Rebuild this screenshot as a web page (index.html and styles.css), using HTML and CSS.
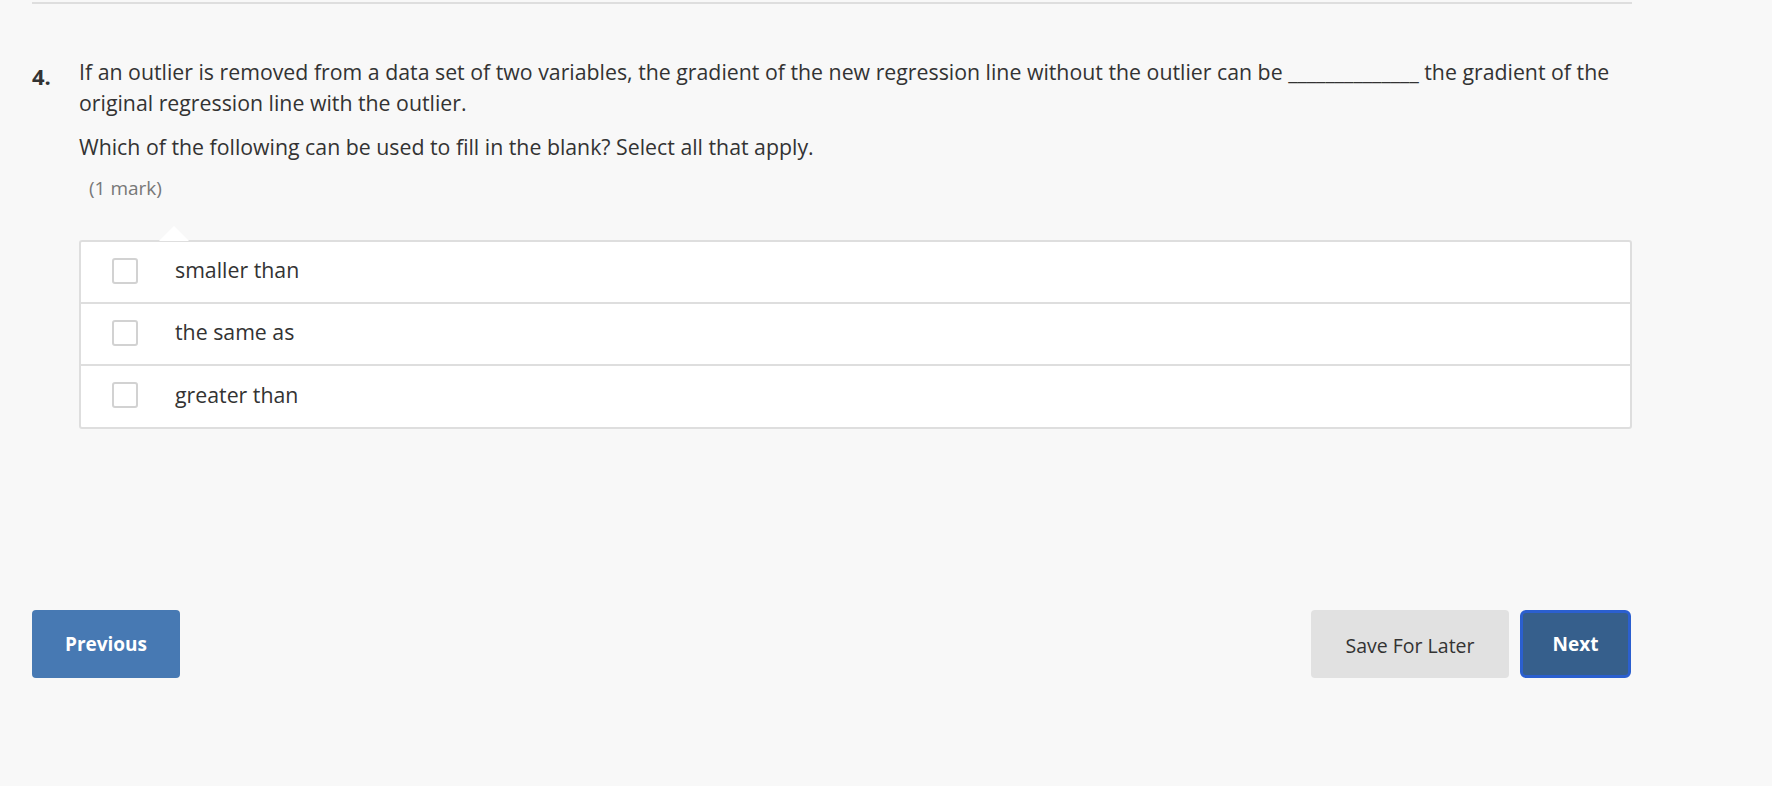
FILE: index.html
```html
<!DOCTYPE html>
<html>
<head>
<meta charset="utf-8">
<link rel="stylesheet" href="styles.css">
</head>
<body>
<div class="page">
  <div class="rule"></div>
  <div class="question">
    <div class="qnum">4.</div>
    <div class="qbody">
      <p class="stem">If an outlier is removed from a data set of two variables, the gradient of the new regression line without the outlier can be ______________ the gradient of the original regression line with the outlier.</p>
      <p class="prompt">Which of the following can be used to fill in the blank? Select all that apply.</p>
      <div class="marks">(1 mark)</div>
      <div class="options">
        <span class="caret"></span>
        <label class="option"><span class="box"></span><span class="label">smaller than</span></label>
        <label class="option"><span class="box"></span><span class="label">the same as</span></label>
        <label class="option"><span class="box"></span><span class="label">greater than</span></label>
      </div>
    </div>
  </div>
  <div class="actions">
    <button class="btn btn-prev">Previous</button>
    <div class="right">
      <button class="btn btn-save">Save For Later</button>
      <button class="btn btn-next">Next</button>
    </div>
  </div>
</div>
</body>
</html>
```

FILE: styles.css
```css
html, body {
  margin: 0;
  padding: 0;
  background: #f8f8f8;
}
body {
  font-family: "Open Sans", "Noto Sans", sans-serif;
  color: #333;
}
.page {
  width: 1600px;
  margin-left: 32px;
}
.rule {
  margin-top: 2px;
  border-top: 2px solid #dedede;
}
.question {
  display: flex;
  margin-top: 53px;
}
.qnum {
  width: 47px;
  flex: none;
  font-size: 22px;
  font-weight: 700;
  line-height: 30.4px;
  padding-top: 4px;
}
.qbody {
  flex: 1;
}
.stem, .prompt {
  margin: 0;
  font-size: 21.3px;
  line-height: 30.5px;
}
.prompt {
  margin-top: 14px;
}
.marks {
  margin-top: 12px;
  padding-left: 10px;
  font-size: 19px;
  line-height: 26px;
  color: #777;
}
.options {
  position: relative;
  margin-top: 39px;
  background: #fff;
  border: 2px solid #dedede;
  border-radius: 3px;
}
.caret {
  position: absolute;
  left: 78px;
  top: -16px;
  width: 0;
  height: 0;
  border-left: 15px solid transparent;
  border-right: 15px solid transparent;
  border-bottom: 15px solid #fff;
}
.option {
  display: flex;
  align-items: center;
  height: 60px;
  border-top: 2px solid #dedede;
}
.option:first-of-type {
  border-top: 0;
}
.option:last-of-type {
  height: 61px;
}
.box {
  width: 22px;
  height: 22px;
  margin-left: 31px;
  margin-top: -2px;
  border: 2px solid #d2d2d2;
  border-radius: 3px;
  background: #fff;
  flex: none;
}
.label {
  margin-left: 37px;
  font-size: 21.3px;
  margin-top: -4px;
}
.actions {
  display: flex;
  justify-content: space-between;
  margin-top: 181px;
  padding-right: 1px;
}
.right {
  display: flex;
  gap: 11px;
}
.btn {
  font-family: "Open Sans", "Noto Sans", sans-serif;
  height: 68px;
  border: 0;
  border-radius: 4px;
  font-size: 19px;
  padding: 0;
}
.btn-prev {
  width: 148px;
  background: #4779b3;
  color: #fff;
  font-weight: 700;
}
.btn-save {
  width: 198px;
  background: #e1e1e1;
  color: #333;
  font-size: 19.5px;
  padding-top: 4px;
}
.btn-next {
  width: 111px;
  background: #365f8c;
  color: #fff;
  font-weight: 700;
  border: 3px solid #2b5fcf;
  border-radius: 6px;
}
```
